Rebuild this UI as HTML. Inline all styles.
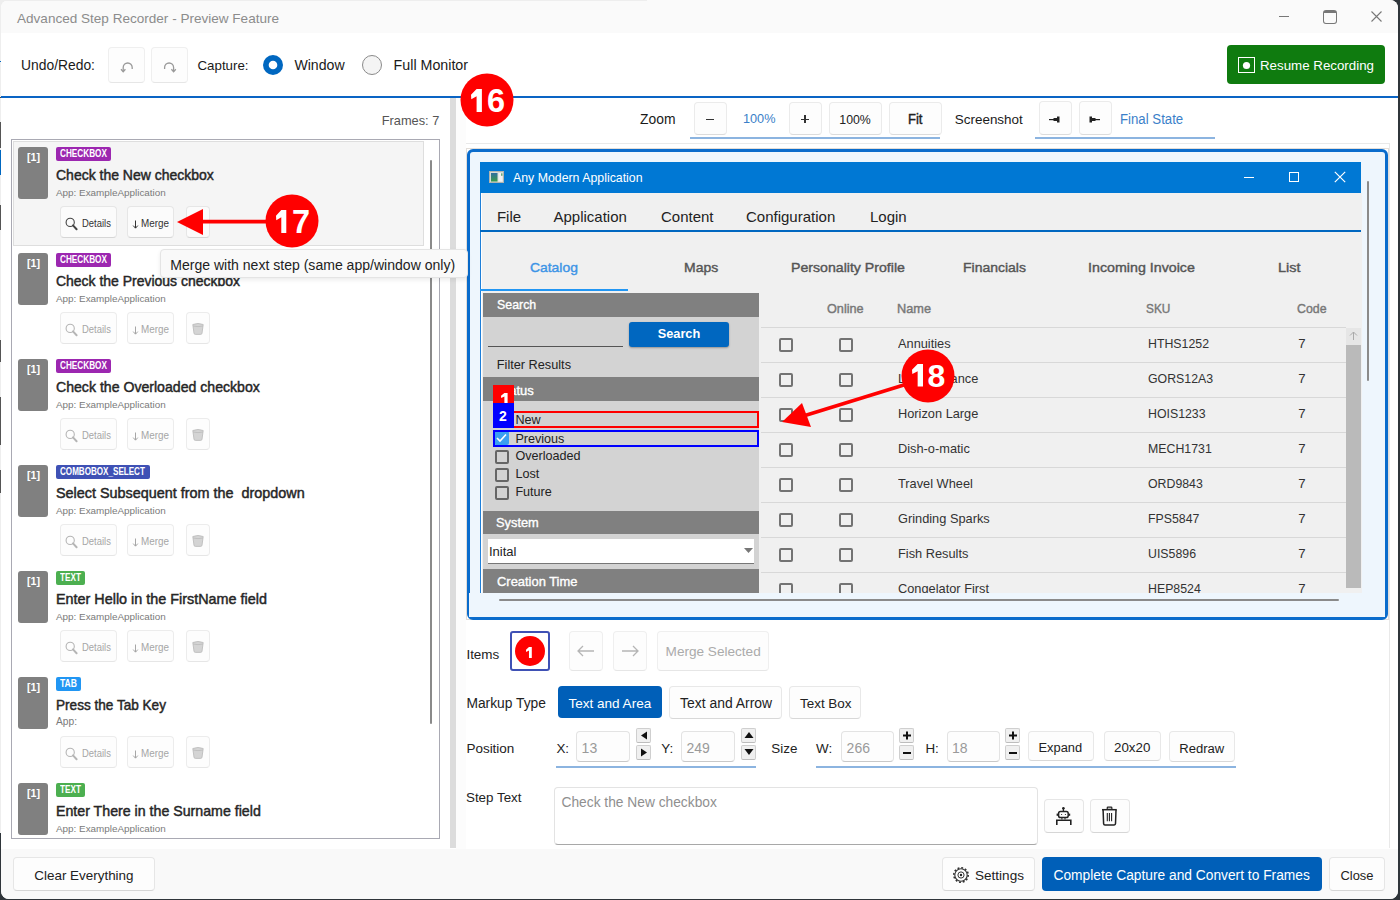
<!DOCTYPE html>
<html><head><meta charset="utf-8"><style>
html,body{margin:0;padding:0;width:1400px;height:900px;overflow:hidden;background:#2f353a;}
#root>*{position:absolute;}
.t{position:absolute;font-family:"Liberation Sans", sans-serif;line-height:1;white-space:pre;}
</style></head><body><div id="root" style="position:relative;width:1400px;height:900px;">
<div style="left:0px;top:0px;width:12px;height:12px;background:#eeeeee;"></div>
<div style="left:1px;top:0px;width:1397px;height:899px;background:#ffffff;border-radius:8px;"></div>
<div style="left:1px;top:0px;width:1397px;height:33px;background:#fafafa;border-radius:8px 8px 0 0;"></div>
<div style="left:1px;top:96px;width:1397px;height:2px;background:#0a64c4;"></div>
<div style="left:1px;top:849px;width:1397px;height:50px;background:#f9f9f9;border-radius:0 0 8px 8px;"></div>
<div class="t" style="left:17.0px;top:12.29px;font-size:13.55px;font-weight:400;color:#8c8c8c;">Advanced Step Recorder - Preview Feature</div>
<div style="left:1279px;top:16px;width:10px;height:1px;background:#777;"></div>
<div style="left:1323px;top:10px;width:14px;height:14px;border:1px solid #777;border-top-width:3px;border-radius:3px;box-sizing:border-box;"></div>
<svg style="left:1370px;top:10px;" width="13" height="13" viewBox="0 0 13 13"><path d="M1.5 1.5 L11.5 11.5 M11.5 1.5 L1.5 11.5" stroke="#777" stroke-width="1.1"/></svg>
<div class="t" style="left:21.0px;top:59.21px;font-size:13.87px;font-weight:400;color:#1a1a1a;">Undo/Redo:</div>
<div style="left:108px;top:47px;width:37px;height:36px;background:#fdfdfd;border:1px solid #efefef;border-bottom-color:#e6e6e6;border-radius:4px;box-sizing:border-box;"></div>
<div style="left:151px;top:47px;width:37px;height:36px;background:#fdfdfd;border:1px solid #efefef;border-bottom-color:#e6e6e6;border-radius:4px;box-sizing:border-box;"></div>
<svg style="left:119px;top:61px;" width="16" height="13" viewBox="0 0 16 13"><path d="M4.2 10.5 V6.5 A4.5 4.5 0 0 1 13.2 6.5 V8" fill="none" stroke="#9a9a9a" stroke-width="1.3"/><path d="M2 8.3 L4.2 10.7 L6.4 8.3" fill="none" stroke="#9a9a9a" stroke-width="1.3"/></svg>
<svg style="left:162px;top:61px;" width="16" height="13" viewBox="0 0 16 13"><path d="M2.6 8 V6.5 A4.5 4.5 0 0 1 11.6 6.5 V10.5" fill="none" stroke="#9a9a9a" stroke-width="1.3"/><path d="M9.4 8.3 L11.6 10.7 L13.8 8.3" fill="none" stroke="#9a9a9a" stroke-width="1.3"/></svg>
<div class="t" style="left:197.5px;top:59.20px;font-size:13.30px;font-weight:400;color:#1a1a1a;">Capture:</div>
<svg style="left:262px;top:54px;" width="22" height="22" viewBox="0 0 22 22"><circle cx="11" cy="11" r="10" fill="#0067c0"/><circle cx="11" cy="11" r="4.3" fill="#fff"/></svg>
<div class="t" style="left:294.4px;top:58.48px;font-size:14.14px;font-weight:400;color:#1a1a1a;">Window</div>
<svg style="left:361px;top:54px;" width="22" height="22" viewBox="0 0 22 22"><circle cx="11" cy="11" r="9.5" fill="#f4f4f4" stroke="#8a8a8a" stroke-width="1"/></svg>
<div class="t" style="left:393.6px;top:58.38px;font-size:14.26px;font-weight:400;color:#1a1a1a;">Full Monitor</div>
<div style="left:1227px;top:45px;width:158px;height:39px;background:#0f7b0f;border-radius:4px;"></div>
<div style="left:1238px;top:57px;width:17px;height:16px;border:1.5px solid #fff;box-sizing:border-box;"></div>
<svg style="left:1240px;top:59px;" width="13" height="13" viewBox="0 0 13 13"><circle cx="6.5" cy="6.5" r="3.6" fill="#fff"/></svg>
<div class="t" style="left:1260.0px;top:58.68px;font-size:13.32px;font-weight:400;color:#ffffff;">Resume Recording</div>
<div style="left:450px;top:98px;width:6px;height:750px;background:#dcdcdc;"></div>
<div class="t" style="left:381.7px;top:114.92px;font-size:12.80px;font-weight:400;color:#555555;">Frames: 7</div>
<div style="left:11px;top:139px;width:429px;height:700px;border:1px solid #a9a9b3;box-sizing:border-box;background:#fff;"></div>
<div style="left:13px;top:141px;width:411px;height:105px;background:#f5f5f5;border:1px solid #dedede;box-sizing:border-box;"></div>
<div style="left:18px;top:147px;width:30px;height:52px;background:#808080;border-radius:3px;"></div>
<div class="t" style="left:26.6px;top:151.53px;font-size:11.50px;font-weight:700;color:#ffffff;transform:scaleX(0.925);transform-origin:0 0;">[1]</div>
<div style="left:56px;top:147px;width:55px;height:14px;background:#9c27b0;border-radius:2px;"></div>
<div class="t" style="left:60.0px;top:149.36px;font-size:10.40px;font-weight:700;color:#ffffff;transform:scaleX(0.790);transform-origin:0 0;">CHECKBOX</div>
<div class="t" style="left:56.0px;top:167.63px;font-size:14.20px;font-weight:400;color:#262626;transform:scaleX(0.986);transform-origin:0 0;-webkit-text-stroke:0.45px #262626;">Check the New checkbox</div>
<div class="t" style="left:56.0px;top:187.59px;font-size:9.89px;font-weight:400;color:#7a7a7a;">App: ExampleApplication</div>
<div style="left:59.5px;top:206px;width:57.0px;height:31.5px;background:#fbfbfb;border:1px solid #e6e6e6;border-bottom-color:#d6d6d6;border-radius:4px;box-sizing:border-box;"></div>
<div style="left:127.2px;top:206px;width:47.2px;height:31.5px;background:#fbfbfb;border:1px solid #e6e6e6;border-bottom-color:#d6d6d6;border-radius:4px;box-sizing:border-box;"></div>
<div style="left:185.5px;top:206px;width:24.900000000000006px;height:31.5px;background:#fbfbfb;border:1px solid #e6e6e6;border-bottom-color:#d6d6d6;border-radius:4px;box-sizing:border-box;"></div>
<svg style="left:64px;top:217px;" width="15" height="15" viewBox="0 0 15 15"><circle cx="6.2" cy="5.4" r="4.1" fill="none" stroke="#444444" stroke-width="1.1"/><path d="M9 8.4 L12.6 12.2" stroke="#444444" stroke-width="2" stroke-linecap="round"/></svg>
<div class="t" style="left:82.0px;top:219.13px;font-size:10.20px;font-weight:400;color:#333333;transform:scaleX(0.927);transform-origin:0 0;">Details</div>
<svg style="left:132px;top:219.5px;" width="7" height="9" viewBox="0 0 7 9"><path d="M3.5 0.5 V8 M1.2 5.6 L3.5 8.2 L5.8 5.6" fill="none" stroke="#333333" stroke-width="1"/></svg>
<div class="t" style="left:140.7px;top:219.13px;font-size:10.20px;font-weight:400;color:#333333;transform:scaleX(0.968);transform-origin:0 0;">Merge</div>
<div style="left:18px;top:253px;width:30px;height:52px;background:#808080;border-radius:3px;"></div>
<div class="t" style="left:26.6px;top:257.53px;font-size:11.50px;font-weight:700;color:#ffffff;transform:scaleX(0.925);transform-origin:0 0;">[1]</div>
<div style="left:56px;top:253px;width:55px;height:14px;background:#9c27b0;border-radius:2px;"></div>
<div class="t" style="left:60.0px;top:255.36px;font-size:10.40px;font-weight:700;color:#ffffff;transform:scaleX(0.790);transform-origin:0 0;">CHECKBOX</div>
<div class="t" style="left:56.0px;top:273.63px;font-size:14.20px;font-weight:400;color:#262626;transform:scaleX(0.984);transform-origin:0 0;-webkit-text-stroke:0.45px #262626;">Check the Previous checkbox</div>
<div class="t" style="left:56.0px;top:293.59px;font-size:9.89px;font-weight:400;color:#7a7a7a;">App: ExampleApplication</div>
<div style="left:59.5px;top:312px;width:57.0px;height:31.5px;background:#fdfdfd;border:1px solid #ececec;border-bottom-color:#e6e6e6;border-radius:4px;box-sizing:border-box;"></div>
<div style="left:127.2px;top:312px;width:47.2px;height:31.5px;background:#fdfdfd;border:1px solid #ececec;border-bottom-color:#e6e6e6;border-radius:4px;box-sizing:border-box;"></div>
<div style="left:185.5px;top:312px;width:24.900000000000006px;height:31.5px;background:#fdfdfd;border:1px solid #ececec;border-bottom-color:#e6e6e6;border-radius:4px;box-sizing:border-box;"></div>
<svg style="left:64px;top:323px;" width="15" height="15" viewBox="0 0 15 15"><circle cx="6.2" cy="5.4" r="4.1" fill="none" stroke="#b5b5b5" stroke-width="1.1"/><path d="M9 8.4 L12.6 12.2" stroke="#b5b5b5" stroke-width="2" stroke-linecap="round"/></svg>
<div class="t" style="left:82.0px;top:325.13px;font-size:10.20px;font-weight:400;color:#a6a6a6;transform:scaleX(0.927);transform-origin:0 0;">Details</div>
<svg style="left:132px;top:325.5px;" width="7" height="9" viewBox="0 0 7 9"><path d="M3.5 0.5 V8 M1.2 5.6 L3.5 8.2 L5.8 5.6" fill="none" stroke="#a6a6a6" stroke-width="1"/></svg>
<div class="t" style="left:140.7px;top:325.13px;font-size:10.20px;font-weight:400;color:#a6a6a6;transform:scaleX(0.968);transform-origin:0 0;">Merge</div>
<svg style="left:191px;top:322px;" width="14" height="14" viewBox="0 0 14 14"><path d="M1.8 2.5 Q7 0.5 12.2 2.5 L11 11.2 Q10.8 12.4 9.6 12.4 H4.4 Q3.2 12.4 3 11.2 Z" fill="#d4d4d4" stroke="#bdbdbd" stroke-width="0.9"/><path d="M2 4 Q7 5.3 12 4" fill="none" stroke="#bdbdbd" stroke-width="0.9"/></svg>
<div style="left:18px;top:359px;width:30px;height:52px;background:#808080;border-radius:3px;"></div>
<div class="t" style="left:26.6px;top:363.53px;font-size:11.50px;font-weight:700;color:#ffffff;transform:scaleX(0.925);transform-origin:0 0;">[1]</div>
<div style="left:56px;top:359px;width:55px;height:14px;background:#9c27b0;border-radius:2px;"></div>
<div class="t" style="left:60.0px;top:361.36px;font-size:10.40px;font-weight:700;color:#ffffff;transform:scaleX(0.790);transform-origin:0 0;">CHECKBOX</div>
<div class="t" style="left:56.0px;top:379.63px;font-size:14.20px;font-weight:400;color:#262626;transform:scaleX(0.994);transform-origin:0 0;-webkit-text-stroke:0.45px #262626;">Check the Overloaded checkbox</div>
<div class="t" style="left:56.0px;top:399.59px;font-size:9.89px;font-weight:400;color:#7a7a7a;">App: ExampleApplication</div>
<div style="left:59.5px;top:418px;width:57.0px;height:31.5px;background:#fdfdfd;border:1px solid #ececec;border-bottom-color:#e6e6e6;border-radius:4px;box-sizing:border-box;"></div>
<div style="left:127.2px;top:418px;width:47.2px;height:31.5px;background:#fdfdfd;border:1px solid #ececec;border-bottom-color:#e6e6e6;border-radius:4px;box-sizing:border-box;"></div>
<div style="left:185.5px;top:418px;width:24.900000000000006px;height:31.5px;background:#fdfdfd;border:1px solid #ececec;border-bottom-color:#e6e6e6;border-radius:4px;box-sizing:border-box;"></div>
<svg style="left:64px;top:429px;" width="15" height="15" viewBox="0 0 15 15"><circle cx="6.2" cy="5.4" r="4.1" fill="none" stroke="#b5b5b5" stroke-width="1.1"/><path d="M9 8.4 L12.6 12.2" stroke="#b5b5b5" stroke-width="2" stroke-linecap="round"/></svg>
<div class="t" style="left:82.0px;top:431.13px;font-size:10.20px;font-weight:400;color:#a6a6a6;transform:scaleX(0.927);transform-origin:0 0;">Details</div>
<svg style="left:132px;top:431.5px;" width="7" height="9" viewBox="0 0 7 9"><path d="M3.5 0.5 V8 M1.2 5.6 L3.5 8.2 L5.8 5.6" fill="none" stroke="#a6a6a6" stroke-width="1"/></svg>
<div class="t" style="left:140.7px;top:431.13px;font-size:10.20px;font-weight:400;color:#a6a6a6;transform:scaleX(0.968);transform-origin:0 0;">Merge</div>
<svg style="left:191px;top:428px;" width="14" height="14" viewBox="0 0 14 14"><path d="M1.8 2.5 Q7 0.5 12.2 2.5 L11 11.2 Q10.8 12.4 9.6 12.4 H4.4 Q3.2 12.4 3 11.2 Z" fill="#d4d4d4" stroke="#bdbdbd" stroke-width="0.9"/><path d="M2 4 Q7 5.3 12 4" fill="none" stroke="#bdbdbd" stroke-width="0.9"/></svg>
<div style="left:18px;top:465px;width:30px;height:52px;background:#808080;border-radius:3px;"></div>
<div class="t" style="left:26.6px;top:469.53px;font-size:11.50px;font-weight:700;color:#ffffff;transform:scaleX(0.925);transform-origin:0 0;">[1]</div>
<div style="left:56px;top:465px;width:94px;height:14px;background:#3f51b5;border-radius:2px;"></div>
<div class="t" style="left:60.0px;top:467.36px;font-size:10.40px;font-weight:700;color:#ffffff;transform:scaleX(0.778);transform-origin:0 0;">COMBOBOX_SELECT</div>
<div class="t" style="left:56.0px;top:485.63px;font-size:14.20px;font-weight:400;color:#262626;transform:scaleX(1.014);transform-origin:0 0;-webkit-text-stroke:0.45px #262626;">Select Subsequent from the  dropdown</div>
<div class="t" style="left:56.0px;top:505.59px;font-size:9.89px;font-weight:400;color:#7a7a7a;">App: ExampleApplication</div>
<div style="left:59.5px;top:524px;width:57.0px;height:31.5px;background:#fdfdfd;border:1px solid #ececec;border-bottom-color:#e6e6e6;border-radius:4px;box-sizing:border-box;"></div>
<div style="left:127.2px;top:524px;width:47.2px;height:31.5px;background:#fdfdfd;border:1px solid #ececec;border-bottom-color:#e6e6e6;border-radius:4px;box-sizing:border-box;"></div>
<div style="left:185.5px;top:524px;width:24.900000000000006px;height:31.5px;background:#fdfdfd;border:1px solid #ececec;border-bottom-color:#e6e6e6;border-radius:4px;box-sizing:border-box;"></div>
<svg style="left:64px;top:535px;" width="15" height="15" viewBox="0 0 15 15"><circle cx="6.2" cy="5.4" r="4.1" fill="none" stroke="#b5b5b5" stroke-width="1.1"/><path d="M9 8.4 L12.6 12.2" stroke="#b5b5b5" stroke-width="2" stroke-linecap="round"/></svg>
<div class="t" style="left:82.0px;top:537.13px;font-size:10.20px;font-weight:400;color:#a6a6a6;transform:scaleX(0.927);transform-origin:0 0;">Details</div>
<svg style="left:132px;top:537.5px;" width="7" height="9" viewBox="0 0 7 9"><path d="M3.5 0.5 V8 M1.2 5.6 L3.5 8.2 L5.8 5.6" fill="none" stroke="#a6a6a6" stroke-width="1"/></svg>
<div class="t" style="left:140.7px;top:537.13px;font-size:10.20px;font-weight:400;color:#a6a6a6;transform:scaleX(0.968);transform-origin:0 0;">Merge</div>
<svg style="left:191px;top:534px;" width="14" height="14" viewBox="0 0 14 14"><path d="M1.8 2.5 Q7 0.5 12.2 2.5 L11 11.2 Q10.8 12.4 9.6 12.4 H4.4 Q3.2 12.4 3 11.2 Z" fill="#d4d4d4" stroke="#bdbdbd" stroke-width="0.9"/><path d="M2 4 Q7 5.3 12 4" fill="none" stroke="#bdbdbd" stroke-width="0.9"/></svg>
<div style="left:18px;top:571px;width:30px;height:52px;background:#808080;border-radius:3px;"></div>
<div class="t" style="left:26.6px;top:575.52px;font-size:11.50px;font-weight:700;color:#ffffff;transform:scaleX(0.925);transform-origin:0 0;">[1]</div>
<div style="left:56px;top:571px;width:29px;height:14px;background:#4caf50;border-radius:2px;"></div>
<div class="t" style="left:60.0px;top:573.36px;font-size:10.40px;font-weight:700;color:#ffffff;transform:scaleX(0.790);transform-origin:0 0;">TEXT</div>
<div class="t" style="left:56.0px;top:591.63px;font-size:14.20px;font-weight:400;color:#262626;transform:scaleX(1.013);transform-origin:0 0;-webkit-text-stroke:0.45px #262626;">Enter Hello in the FirstName field</div>
<div class="t" style="left:56.0px;top:611.59px;font-size:9.89px;font-weight:400;color:#7a7a7a;">App: ExampleApplication</div>
<div style="left:59.5px;top:630px;width:57.0px;height:31.5px;background:#fdfdfd;border:1px solid #ececec;border-bottom-color:#e6e6e6;border-radius:4px;box-sizing:border-box;"></div>
<div style="left:127.2px;top:630px;width:47.2px;height:31.5px;background:#fdfdfd;border:1px solid #ececec;border-bottom-color:#e6e6e6;border-radius:4px;box-sizing:border-box;"></div>
<div style="left:185.5px;top:630px;width:24.900000000000006px;height:31.5px;background:#fdfdfd;border:1px solid #ececec;border-bottom-color:#e6e6e6;border-radius:4px;box-sizing:border-box;"></div>
<svg style="left:64px;top:641px;" width="15" height="15" viewBox="0 0 15 15"><circle cx="6.2" cy="5.4" r="4.1" fill="none" stroke="#b5b5b5" stroke-width="1.1"/><path d="M9 8.4 L12.6 12.2" stroke="#b5b5b5" stroke-width="2" stroke-linecap="round"/></svg>
<div class="t" style="left:82.0px;top:643.13px;font-size:10.20px;font-weight:400;color:#a6a6a6;transform:scaleX(0.927);transform-origin:0 0;">Details</div>
<svg style="left:132px;top:643.5px;" width="7" height="9" viewBox="0 0 7 9"><path d="M3.5 0.5 V8 M1.2 5.6 L3.5 8.2 L5.8 5.6" fill="none" stroke="#a6a6a6" stroke-width="1"/></svg>
<div class="t" style="left:140.7px;top:643.13px;font-size:10.20px;font-weight:400;color:#a6a6a6;transform:scaleX(0.968);transform-origin:0 0;">Merge</div>
<svg style="left:191px;top:640px;" width="14" height="14" viewBox="0 0 14 14"><path d="M1.8 2.5 Q7 0.5 12.2 2.5 L11 11.2 Q10.8 12.4 9.6 12.4 H4.4 Q3.2 12.4 3 11.2 Z" fill="#d4d4d4" stroke="#bdbdbd" stroke-width="0.9"/><path d="M2 4 Q7 5.3 12 4" fill="none" stroke="#bdbdbd" stroke-width="0.9"/></svg>
<div style="left:18px;top:677px;width:30px;height:52px;background:#808080;border-radius:3px;"></div>
<div class="t" style="left:26.6px;top:681.52px;font-size:11.50px;font-weight:700;color:#ffffff;transform:scaleX(0.925);transform-origin:0 0;">[1]</div>
<div style="left:56px;top:677px;width:25px;height:14px;background:#2196f3;border-radius:2px;"></div>
<div class="t" style="left:60.0px;top:679.36px;font-size:10.40px;font-weight:700;color:#ffffff;transform:scaleX(0.825);transform-origin:0 0;">TAB</div>
<div class="t" style="left:56.0px;top:697.63px;font-size:14.20px;font-weight:400;color:#262626;transform:scaleX(0.957);transform-origin:0 0;-webkit-text-stroke:0.45px #262626;">Press the Tab Key</div>
<div class="t" style="left:56.0px;top:717.32px;font-size:10.21px;font-weight:400;color:#7a7a7a;">App:</div>
<div style="left:59.5px;top:736px;width:57.0px;height:31.5px;background:#fdfdfd;border:1px solid #ececec;border-bottom-color:#e6e6e6;border-radius:4px;box-sizing:border-box;"></div>
<div style="left:127.2px;top:736px;width:47.2px;height:31.5px;background:#fdfdfd;border:1px solid #ececec;border-bottom-color:#e6e6e6;border-radius:4px;box-sizing:border-box;"></div>
<div style="left:185.5px;top:736px;width:24.900000000000006px;height:31.5px;background:#fdfdfd;border:1px solid #ececec;border-bottom-color:#e6e6e6;border-radius:4px;box-sizing:border-box;"></div>
<svg style="left:64px;top:747px;" width="15" height="15" viewBox="0 0 15 15"><circle cx="6.2" cy="5.4" r="4.1" fill="none" stroke="#b5b5b5" stroke-width="1.1"/><path d="M9 8.4 L12.6 12.2" stroke="#b5b5b5" stroke-width="2" stroke-linecap="round"/></svg>
<div class="t" style="left:82.0px;top:749.13px;font-size:10.20px;font-weight:400;color:#a6a6a6;transform:scaleX(0.927);transform-origin:0 0;">Details</div>
<svg style="left:132px;top:749.5px;" width="7" height="9" viewBox="0 0 7 9"><path d="M3.5 0.5 V8 M1.2 5.6 L3.5 8.2 L5.8 5.6" fill="none" stroke="#a6a6a6" stroke-width="1"/></svg>
<div class="t" style="left:140.7px;top:749.13px;font-size:10.20px;font-weight:400;color:#a6a6a6;transform:scaleX(0.968);transform-origin:0 0;">Merge</div>
<svg style="left:191px;top:746px;" width="14" height="14" viewBox="0 0 14 14"><path d="M1.8 2.5 Q7 0.5 12.2 2.5 L11 11.2 Q10.8 12.4 9.6 12.4 H4.4 Q3.2 12.4 3 11.2 Z" fill="#d4d4d4" stroke="#bdbdbd" stroke-width="0.9"/><path d="M2 4 Q7 5.3 12 4" fill="none" stroke="#bdbdbd" stroke-width="0.9"/></svg>
<div style="left:18px;top:783px;width:30px;height:52px;background:#808080;border-radius:3px;"></div>
<div class="t" style="left:26.6px;top:787.52px;font-size:11.50px;font-weight:700;color:#ffffff;transform:scaleX(0.925);transform-origin:0 0;">[1]</div>
<div style="left:56px;top:783px;width:29px;height:14px;background:#4caf50;border-radius:2px;"></div>
<div class="t" style="left:60.0px;top:785.36px;font-size:10.40px;font-weight:700;color:#ffffff;transform:scaleX(0.790);transform-origin:0 0;">TEXT</div>
<div class="t" style="left:56.0px;top:803.63px;font-size:14.20px;font-weight:400;color:#262626;transform:scaleX(1.000);transform-origin:0 0;-webkit-text-stroke:0.45px #262626;">Enter There in the Surname field</div>
<div class="t" style="left:56.0px;top:823.59px;font-size:9.89px;font-weight:400;color:#7a7a7a;">App: ExampleApplication</div>
<div style="left:430px;top:160px;width:2px;height:564px;background:#8a8a8a;border-radius:1px;"></div>
<div style="left:0px;top:0px;width:1px;height:833px;background:#eeeeee;"></div>
<div style="left:0px;top:0px;width:647px;height:1px;background:#eeeeee;"></div>
<div style="left:0px;top:61px;width:1px;height:1px;background:#0067c0;"></div>
<div style="left:0px;top:97px;width:1px;height:1px;background:#444;"></div>
<div style="left:0px;top:122px;width:1px;height:26px;background:#555;"></div>
<div style="left:0px;top:150px;width:1px;height:25px;background:#0067c0;"></div>
<div style="left:0px;top:205px;width:1px;height:25px;background:#555;"></div>
<div style="left:0px;top:340px;width:1px;height:22px;background:#555;"></div>
<div style="left:0px;top:397px;width:1px;height:48px;background:#555;"></div>
<div style="left:0px;top:470px;width:1px;height:23px;background:#555;"></div>
<div class="t" style="left:640.0px;top:113.20px;font-size:13.89px;font-weight:400;color:#1a1a1a;">Zoom</div>
<div style="left:694px;top:102px;width:33px;height:33px;background:#fdfdfd;border:1px solid #ebebeb;border-bottom-color:#dcdcdc;border-radius:4px;box-sizing:border-box;"></div>
<div style="left:706px;top:119px;width:8px;height:1px;background:#333;"></div>
<div class="t" style="left:743.4px;top:112.44px;font-size:13.60px;font-weight:400;color:#3b7fc9;transform:scaleX(0.934);transform-origin:0 0;">100%</div>
<div style="left:789px;top:102px;width:33px;height:33px;background:#fdfdfd;border:1px solid #ebebeb;border-bottom-color:#dcdcdc;border-radius:4px;box-sizing:border-box;"></div>
<div style="left:801px;top:118.5px;width:8px;height:1.2000000000000028px;background:#333;"></div>
<div style="left:804.4px;top:115px;width:1.2000000000000455px;height:8px;background:#333;"></div>
<div style="left:829px;top:102px;width:53px;height:33px;background:#fdfdfd;border:1px solid #ebebeb;border-bottom-color:#dcdcdc;border-radius:4px;box-sizing:border-box;"></div>
<div class="t" style="left:839.3px;top:113.53px;font-size:12.32px;font-weight:400;color:#222;">100%</div>
<div style="left:889px;top:102px;width:53px;height:33px;background:#fdfdfd;border:1px solid #ebebeb;border-bottom-color:#dcdcdc;border-radius:4px;box-sizing:border-box;"></div>
<div class="t" style="left:907.8px;top:112.10px;font-size:14.00px;font-weight:400;color:#222;transform:scaleX(0.932);transform-origin:0 0;-webkit-text-stroke:0.4px #222;">Fit</div>
<div style="left:690px;top:137px;width:250px;height:2px;background:#8cb4e0;"></div>
<div class="t" style="left:954.8px;top:112.57px;font-size:13.44px;font-weight:400;color:#1a1a1a;">Screenshot</div>
<div style="left:1039px;top:101px;width:33px;height:34px;background:#fdfdfd;border:1px solid #ebebeb;border-bottom-color:#dcdcdc;border-radius:4px;box-sizing:border-box;"></div>
<div style="left:1079px;top:101px;width:33px;height:34px;background:#fdfdfd;border:1px solid #ebebeb;border-bottom-color:#dcdcdc;border-radius:4px;box-sizing:border-box;"></div>
<svg style="left:1049px;top:116px;" width="12" height="7" viewBox="0 0 12 7"><rect x="0" y="3" width="5" height="1.2" fill="#222"/><rect x="4.5" y="2" width="3.5" height="3" fill="#222"/><rect x="8" y="0.5" width="2.5" height="6" fill="#222"/></svg>
<svg style="left:1089px;top:116px;" width="12" height="7" viewBox="0 0 12 7"><rect x="6" y="3" width="5" height="1.2" fill="#222"/><rect x="3" y="2" width="3.5" height="3" fill="#222"/><rect x="0.5" y="0.5" width="2.5" height="6" fill="#222"/></svg>
<div class="t" style="left:1120.0px;top:112.10px;font-size:14.00px;font-weight:400;color:#3b7fc9;transform:scaleX(0.944);transform-origin:0 0;">Final State</div>
<div style="left:1035px;top:137px;width:180px;height:2px;background:#8cb4e0;"></div>
<div style="left:466px;top:143px;width:923px;height:1px;background:#e9e9e9;"></div>
<div style="left:456px;top:98px;width:10px;height:751px;background:#fcfcfc;"></div>
<div style="left:1389px;top:143px;width:1px;height:705px;background:#e9e9e9;"></div>
<div style="left:466px;top:148px;width:923px;height:472px;background:#fff;border:1px solid #e2ddd8;box-sizing:border-box;"></div>
<div style="left:467px;top:149px;width:921px;height:471px;background:#eef6fd;border:3px solid #0a6ccc;border-radius:6px;box-sizing:border-box;"></div>
<div style="left:480px;top:162px;width:881px;height:431px;background:#f0f0f0;"></div>
<div style="left:480px;top:162px;width:881px;height:31px;background:#0078d4;"></div>
<div style="left:481px;top:193px;width:1px;height:400px;background:#ffffff;"></div>
<div style="left:480px;top:193px;width:1px;height:400px;background:#1f7fd8;"></div>
<svg style="left:489px;top:171px;" width="15" height="12" viewBox="0 0 15 12"><defs><linearGradient id="ig" x1="0" y1="0" x2="0" y2="1"><stop offset="0" stop-color="#2f6fa0"/><stop offset="1" stop-color="#3a9a4a"/></linearGradient></defs><rect x="0" y="0" width="15" height="12" fill="#d8dcd8"/><rect x="0.5" y="0.5" width="14" height="11" fill="none" stroke="#b0b4b0" stroke-width="1"/><rect x="2" y="2" width="6.5" height="8.5" fill="url(#ig)"/><rect x="9.5" y="2" width="4" height="8.5" fill="#f2f2f2"/><rect x="12.2" y="2.3" width="1.2" height="2.5" fill="#4a9a5a"/></svg>
<div class="t" style="left:513.0px;top:172.11px;font-size:12.34px;font-weight:400;color:#ffffff;">Any Modern Application</div>
<div style="left:1244px;top:177px;width:10px;height:1px;background:#fff;"></div>
<div style="left:1289px;top:172px;width:10px;height:10px;border:1px solid #fff;box-sizing:border-box;"></div>
<svg style="left:1334px;top:171px;" width="12" height="12" viewBox="0 0 12 12"><path d="M0.8 0.8 L11.2 11.2 M11.2 0.8 L0.8 11.2" stroke="#fff" stroke-width="1.2"/></svg>
<div style="left:480px;top:230px;width:881px;height:2px;background:#0067c0;"></div>
<div class="t" style="left:496.9px;top:209.45px;font-size:15.00px;font-weight:400;color:#222;">File</div>
<div class="t" style="left:553.5px;top:209.45px;font-size:15.00px;font-weight:400;color:#222;">Application</div>
<div class="t" style="left:661.0px;top:209.45px;font-size:15.00px;font-weight:400;color:#222;">Content</div>
<div class="t" style="left:746.0px;top:209.45px;font-size:15.00px;font-weight:400;color:#222;">Configuration</div>
<div class="t" style="left:870.0px;top:209.45px;font-size:15.00px;font-weight:400;color:#222;">Login</div>
<div class="t" style="left:530.4px;top:260.64px;font-size:13.60px;font-weight:400;color:#3d94e6;transform:scaleX(1.022);transform-origin:0 0;-webkit-text-stroke:0.4px #3d94e6;">Catalog</div>
<div class="t" style="left:683.9px;top:260.64px;font-size:13.60px;font-weight:400;color:#555;transform:scaleX(1.028);transform-origin:0 0;-webkit-text-stroke:0.4px #555;">Maps</div>
<div class="t" style="left:791.0px;top:260.64px;font-size:13.60px;font-weight:400;color:#555;transform:scaleX(1.040);transform-origin:0 0;-webkit-text-stroke:0.4px #555;">Personality Profile</div>
<div class="t" style="left:963.0px;top:260.64px;font-size:13.60px;font-weight:400;color:#555;transform:scaleX(1.029);transform-origin:0 0;-webkit-text-stroke:0.4px #555;">Financials</div>
<div class="t" style="left:1088.0px;top:260.64px;font-size:13.60px;font-weight:400;color:#555;transform:scaleX(1.048);transform-origin:0 0;-webkit-text-stroke:0.4px #555;">Incoming Invoice</div>
<div class="t" style="left:1277.5px;top:260.64px;font-size:13.60px;font-weight:400;color:#555;transform:scaleX(1.063);transform-origin:0 0;-webkit-text-stroke:0.4px #555;">List</div>
<div style="left:480px;top:289px;width:148px;height:2px;background:#2196f3;"></div>
<div style="left:483px;top:293px;width:276px;height:300px;background:#d3d3d3;"></div>
<div style="left:483px;top:293px;width:276px;height:24px;background:#808080;"></div>
<div style="left:483px;top:377px;width:276px;height:24px;background:#808080;"></div>
<div style="left:483px;top:511px;width:276px;height:23px;background:#808080;"></div>
<div style="left:483px;top:569px;width:276px;height:24px;background:#808080;"></div>
<div class="t" style="left:496.8px;top:297.95px;font-size:13.00px;font-weight:400;color:#ffffff;transform:scaleX(0.952);transform-origin:0 0;-webkit-text-stroke:0.35px #fff;">Search</div>
<div style="left:629px;top:322px;width:100px;height:25px;background:#0067c0;border-radius:3px;box-shadow:0 1px 2px rgba(0,0,0,0.3);"></div>
<div class="t" style="left:657.7px;top:327.74px;font-size:12.77px;font-weight:700;color:#ffffff;">Search</div>
<div style="left:488px;top:346px;width:135px;height:1px;background:#555;"></div>
<div class="t" style="left:496.8px;top:359.48px;font-size:12.73px;font-weight:400;color:#222;">Filter Results</div>
<div class="t" style="left:496.8px;top:384.25px;font-size:13.00px;font-weight:400;color:#ffffff;transform:scaleX(0.999);transform-origin:0 0;-webkit-text-stroke:0.35px #fff;">Status</div>
<div class="t" style="left:515.4px;top:414.49px;font-size:12.60px;font-weight:400;color:#222;">New</div>
<div class="t" style="left:515.4px;top:432.59px;font-size:12.60px;font-weight:400;color:#222;">Previous</div>
<div class="t" style="left:515.4px;top:450.39px;font-size:12.60px;font-weight:400;color:#222;">Overloaded</div>
<div class="t" style="left:515.4px;top:468.39px;font-size:12.60px;font-weight:400;color:#222;">Lost</div>
<div class="t" style="left:515.4px;top:486.39px;font-size:12.60px;font-weight:400;color:#222;">Future</div>
<div style="left:495px;top:413px;width:14px;height:14px;border:2px solid #666;border-radius:2px;box-sizing:border-box;"></div>
<div style="left:495px;top:449.5px;width:14px;height:14.0px;border:2px solid #666;border-radius:2px;box-sizing:border-box;"></div>
<div style="left:495px;top:467.5px;width:14px;height:14.0px;border:2px solid #666;border-radius:2px;box-sizing:border-box;"></div>
<div style="left:495px;top:485.5px;width:14px;height:14.0px;border:2px solid #666;border-radius:2px;box-sizing:border-box;"></div>
<div style="left:494px;top:431px;width:15px;height:14px;background:#3ba0f0;border-radius:2px;"></div>
<svg style="left:494px;top:431px;" width="15" height="14" viewBox="0 0 15 14"><path d="M3 7 L6 10 L12 3.5" fill="none" stroke="#fff" stroke-width="1.6"/></svg>
<div class="t" style="left:496.4px;top:516.05px;font-size:13.00px;font-weight:400;color:#ffffff;transform:scaleX(0.987);transform-origin:0 0;-webkit-text-stroke:0.35px #fff;">System</div>
<div style="left:488px;top:539px;width:266px;height:25px;background:#fff;border-bottom:1px solid #777;box-sizing:border-box;"></div>
<div class="t" style="left:489.0px;top:544.93px;font-size:13.02px;font-weight:400;color:#222;">Inital</div>
<svg style="left:744px;top:548px;" width="10" height="6" viewBox="0 0 10 6"><path d="M0 0 H9 L4.5 5 Z" fill="#777"/></svg>
<div class="t" style="left:496.7px;top:575.45px;font-size:13.00px;font-weight:400;color:#ffffff;transform:scaleX(0.994);transform-origin:0 0;-webkit-text-stroke:0.35px #fff;">Creation Time</div>
<div class="t" style="left:827.3px;top:302.35px;font-size:13.00px;font-weight:400;color:#777;transform:scaleX(0.974);transform-origin:0 0;-webkit-text-stroke:0.4px #777;">Online</div>
<div class="t" style="left:896.5px;top:302.35px;font-size:13.00px;font-weight:400;color:#777;transform:scaleX(0.980);transform-origin:0 0;-webkit-text-stroke:0.4px #777;">Name</div>
<div class="t" style="left:1146.0px;top:302.35px;font-size:13.00px;font-weight:400;color:#777;transform:scaleX(0.909);transform-origin:0 0;-webkit-text-stroke:0.4px #777;">SKU</div>
<div class="t" style="left:1296.5px;top:302.35px;font-size:13.00px;font-weight:400;color:#777;transform:scaleX(0.949);transform-origin:0 0;-webkit-text-stroke:0.4px #777;">Code</div>
<div style="left:761px;top:327px;width:585px;height:1px;background:#d8d8d8;"></div>
<div style="left:779px;top:338px;width:14px;height:13.5px;border:2px solid #737373;border-radius:2px;box-sizing:border-box;"></div>
<div style="left:839px;top:338px;width:14px;height:13.5px;border:2px solid #737373;border-radius:2px;box-sizing:border-box;"></div>
<div style="left:761px;top:362px;width:585px;height:1px;background:#d8d8d8;"></div>
<div style="left:779px;top:373px;width:14px;height:13.5px;border:2px solid #737373;border-radius:2px;box-sizing:border-box;"></div>
<div style="left:839px;top:373px;width:14px;height:13.5px;border:2px solid #737373;border-radius:2px;box-sizing:border-box;"></div>
<div style="left:761px;top:397px;width:585px;height:1px;background:#d8d8d8;"></div>
<div style="left:779px;top:408px;width:14px;height:13.5px;border:2px solid #737373;border-radius:2px;box-sizing:border-box;"></div>
<div style="left:839px;top:408px;width:14px;height:13.5px;border:2px solid #737373;border-radius:2px;box-sizing:border-box;"></div>
<div style="left:761px;top:432px;width:585px;height:1px;background:#d8d8d8;"></div>
<div style="left:779px;top:443px;width:14px;height:13.5px;border:2px solid #737373;border-radius:2px;box-sizing:border-box;"></div>
<div style="left:839px;top:443px;width:14px;height:13.5px;border:2px solid #737373;border-radius:2px;box-sizing:border-box;"></div>
<div style="left:761px;top:467px;width:585px;height:1px;background:#d8d8d8;"></div>
<div style="left:779px;top:478px;width:14px;height:13.5px;border:2px solid #737373;border-radius:2px;box-sizing:border-box;"></div>
<div style="left:839px;top:478px;width:14px;height:13.5px;border:2px solid #737373;border-radius:2px;box-sizing:border-box;"></div>
<div style="left:761px;top:502px;width:585px;height:1px;background:#d8d8d8;"></div>
<div style="left:779px;top:513px;width:14px;height:13.5px;border:2px solid #737373;border-radius:2px;box-sizing:border-box;"></div>
<div style="left:839px;top:513px;width:14px;height:13.5px;border:2px solid #737373;border-radius:2px;box-sizing:border-box;"></div>
<div style="left:761px;top:537px;width:585px;height:1px;background:#d8d8d8;"></div>
<div style="left:779px;top:548px;width:14px;height:13.5px;border:2px solid #737373;border-radius:2px;box-sizing:border-box;"></div>
<div style="left:839px;top:548px;width:14px;height:13.5px;border:2px solid #737373;border-radius:2px;box-sizing:border-box;"></div>
<div style="left:761px;top:572px;width:585px;height:1px;background:#d8d8d8;"></div>
<div style="left:779px;top:583px;width:14px;height:13.5px;border:2px solid #737373;border-radius:2px;box-sizing:border-box;"></div>
<div style="left:839px;top:583px;width:14px;height:13.5px;border:2px solid #737373;border-radius:2px;box-sizing:border-box;"></div>
<div class="t" style="left:898.4px;top:336.88px;font-size:13.20px;font-weight:400;color:#333;transform:scaleX(0.970);transform-origin:0 0;">Annuities</div>
<div class="t" style="left:1148.2px;top:336.88px;font-size:13.20px;font-weight:400;color:#333;transform:scaleX(0.935);transform-origin:0 0;">HTHS1252</div>
<div class="t" style="left:1298.2px;top:336.88px;font-size:13.20px;font-weight:400;color:#333;">7</div>
<div class="t" style="left:898.4px;top:371.88px;font-size:13.20px;font-weight:400;color:#333;transform:scaleX(0.970);transform-origin:0 0;">Life Insurance</div>
<div class="t" style="left:1148.2px;top:371.88px;font-size:13.20px;font-weight:400;color:#333;transform:scaleX(0.935);transform-origin:0 0;">GORS12A3</div>
<div class="t" style="left:1298.2px;top:371.88px;font-size:13.20px;font-weight:400;color:#333;">7</div>
<div class="t" style="left:898.4px;top:406.88px;font-size:13.20px;font-weight:400;color:#333;transform:scaleX(0.970);transform-origin:0 0;">Horizon Large</div>
<div class="t" style="left:1148.2px;top:406.88px;font-size:13.20px;font-weight:400;color:#333;transform:scaleX(0.935);transform-origin:0 0;">HOIS1233</div>
<div class="t" style="left:1298.2px;top:406.88px;font-size:13.20px;font-weight:400;color:#333;">7</div>
<div class="t" style="left:898.4px;top:441.88px;font-size:13.20px;font-weight:400;color:#333;transform:scaleX(0.970);transform-origin:0 0;">Dish-o-matic</div>
<div class="t" style="left:1148.2px;top:441.88px;font-size:13.20px;font-weight:400;color:#333;transform:scaleX(0.935);transform-origin:0 0;">MECH1731</div>
<div class="t" style="left:1298.2px;top:441.88px;font-size:13.20px;font-weight:400;color:#333;">7</div>
<div class="t" style="left:898.4px;top:476.88px;font-size:13.20px;font-weight:400;color:#333;transform:scaleX(0.970);transform-origin:0 0;">Travel Wheel</div>
<div class="t" style="left:1148.2px;top:476.88px;font-size:13.20px;font-weight:400;color:#333;transform:scaleX(0.935);transform-origin:0 0;">ORD9843</div>
<div class="t" style="left:1298.2px;top:476.88px;font-size:13.20px;font-weight:400;color:#333;">7</div>
<div class="t" style="left:898.4px;top:511.88px;font-size:13.20px;font-weight:400;color:#333;transform:scaleX(0.970);transform-origin:0 0;">Grinding Sparks</div>
<div class="t" style="left:1148.2px;top:511.88px;font-size:13.20px;font-weight:400;color:#333;transform:scaleX(0.935);transform-origin:0 0;">FPS5847</div>
<div class="t" style="left:1298.2px;top:511.88px;font-size:13.20px;font-weight:400;color:#333;">7</div>
<div class="t" style="left:898.4px;top:546.88px;font-size:13.20px;font-weight:400;color:#333;transform:scaleX(0.970);transform-origin:0 0;">Fish Results</div>
<div class="t" style="left:1148.2px;top:546.88px;font-size:13.20px;font-weight:400;color:#333;transform:scaleX(0.935);transform-origin:0 0;">UIS5896</div>
<div class="t" style="left:1298.2px;top:546.88px;font-size:13.20px;font-weight:400;color:#333;">7</div>
<div class="t" style="left:898.4px;top:581.88px;font-size:13.20px;font-weight:400;color:#333;transform:scaleX(0.970);transform-origin:0 0;">Congelator First</div>
<div class="t" style="left:1148.2px;top:581.88px;font-size:13.20px;font-weight:400;color:#333;transform:scaleX(0.935);transform-origin:0 0;">HEP8524</div>
<div class="t" style="left:1298.2px;top:581.88px;font-size:13.20px;font-weight:400;color:#333;">7</div>
<div style="left:1346px;top:328px;width:15px;height:260px;background:#bababa;"></div>
<div style="left:1346px;top:328px;width:15px;height:17px;background:#e6e6e6;"></div>
<svg style="left:1349px;top:331px;" width="9" height="10" viewBox="0 0 9 10"><path d="M4.5 1 V9 M1 4.5 L4.5 1 L8 4.5" fill="none" stroke="#aaa" stroke-width="1"/></svg>
<div style="left:1361px;top:193px;width:1px;height:400px;background:#f0f0f0;"></div>
<div style="left:469px;top:593px;width:916px;height:24px;background:#eef6fd;"></div>
<div style="left:499px;top:599px;width:840px;height:2px;background:#8a8a8a;border-radius:1px;"></div>
<div style="left:1367px;top:181px;width:2px;height:200px;background:#8a8a8a;border-radius:1px;"></div>
<div style="left:493px;top:411px;width:266px;height:17px;border:2px solid #ff0000;box-sizing:border-box;"></div>
<div style="left:493px;top:429.5px;width:266px;height:17.0px;border:2px solid #0000ff;box-sizing:border-box;"></div>
<div style="left:493px;top:385px;width:21px;height:18px;background:#ff0000;"></div>
<svg style="left:500.5px;top:393.2px;" width="7.6" height="12" viewBox="0 0 7.6 12"><polygon points="3.39,0.00 6.60,0.00 6.60,11.00 3.39,11.00 3.39,3.49 0.18,4.88 0.00,2.77" fill="#fff"/></svg>
<div style="left:493px;top:403px;width:21px;height:24.5px;background:#0000ff;"></div>
<div class="t" style="left:499.0px;top:409.10px;font-size:14.00px;font-weight:700;color:#fff;">2</div>
<div class="t" style="left:466.4px;top:647.66px;font-size:13.46px;font-weight:400;color:#222;">Items</div>
<div style="left:510px;top:631px;width:40px;height:40px;border:2px solid #3f51b5;border-radius:3px;box-sizing:border-box;background:#fff;"></div>
<svg style="left:515px;top:636px;" width="30" height="30" viewBox="0 0 30 30"><circle cx="15" cy="15" r="15" fill="#ff0000"/></svg>
<svg style="left:526.4px;top:647px;" width="6.8" height="12" viewBox="0 0 6.8 12"><polygon points="2.98,0.00 5.80,0.00 5.80,11.00 2.98,11.00 2.98,3.49 0.16,4.88 0.00,2.77" fill="#fff"/></svg>
<div style="left:569px;top:631px;width:34px;height:40px;background:#fdfdfd;border:1px solid #efefef;border-bottom-color:#e6e6e6;border-radius:4px;box-sizing:border-box;"></div>
<div style="left:613px;top:631px;width:34px;height:40px;background:#fdfdfd;border:1px solid #efefef;border-bottom-color:#e6e6e6;border-radius:4px;box-sizing:border-box;"></div>
<svg style="left:577px;top:645px;" width="18" height="12" viewBox="0 0 18 12"><path d="M1 6 H17 M6 1 L1 6 L6 11" fill="none" stroke="#b5b5b5" stroke-width="1.3"/></svg>
<svg style="left:621px;top:645px;" width="18" height="12" viewBox="0 0 18 12"><path d="M1 6 H17 M12 1 L17 6 L12 11" fill="none" stroke="#b5b5b5" stroke-width="1.3"/></svg>
<div style="left:657px;top:631px;width:112px;height:40px;background:#fdfdfd;border:1px solid #efefef;border-bottom-color:#e6e6e6;border-radius:4px;box-sizing:border-box;"></div>
<div class="t" style="left:665.6px;top:644.76px;font-size:13.58px;font-weight:400;color:#ababab;">Merge Selected</div>
<div class="t" style="left:466.4px;top:697.27px;font-size:13.80px;font-weight:400;color:#222;">Markup Type</div>
<div style="left:558px;top:686px;width:104px;height:32px;background:#005fb8;border-radius:4px;"></div>
<div class="t" style="left:568.4px;top:696.88px;font-size:13.56px;font-weight:400;color:#ffffff;">Text and Area</div>
<div style="left:669px;top:686px;width:113px;height:33px;background:#fdfdfd;border:1px solid #e8e8e8;border-bottom-color:#d8d8d8;border-radius:4px;box-sizing:border-box;"></div>
<div class="t" style="left:680.1px;top:696.58px;font-size:13.91px;font-weight:400;color:#222;">Text and Arrow</div>
<div style="left:789px;top:686px;width:72px;height:33px;background:#fdfdfd;border:1px solid #e8e8e8;border-bottom-color:#d8d8d8;border-radius:4px;box-sizing:border-box;"></div>
<div class="t" style="left:800.0px;top:696.99px;font-size:13.43px;font-weight:400;color:#222;">Text Box</div>
<div class="t" style="left:466.4px;top:742.03px;font-size:13.49px;font-weight:400;color:#222;">Position</div>
<div class="t" style="left:556.4px;top:741.51px;font-size:13.40px;font-weight:400;color:#222;">X:</div>
<div style="left:576px;top:731px;width:54px;height:31px;background:#fdfdfd;border:1px solid #e3e3e3;border-bottom-color:#c8c8c8;border-radius:4px;box-sizing:border-box;"></div>
<div class="t" style="left:581.6px;top:741.10px;font-size:14.00px;font-weight:400;color:#9a9a9a;">13</div>
<div class="t" style="left:661.3px;top:741.51px;font-size:13.40px;font-weight:400;color:#222;">Y:</div>
<div style="left:681px;top:731px;width:54px;height:31px;background:#fdfdfd;border:1px solid #e3e3e3;border-bottom-color:#c8c8c8;border-radius:4px;box-sizing:border-box;"></div>
<div class="t" style="left:686.4px;top:741.10px;font-size:14.00px;font-weight:400;color:#9a9a9a;">249</div>
<div style="left:636px;top:728px;width:15px;height:14.5px;background:#f0f0f0;border:1px solid #cfcfcf;border-bottom-color:#bdbdbd;border-radius:2px;box-sizing:border-box;"></div>
<div style="left:636px;top:744.5px;width:15px;height:15.0px;background:#f0f0f0;border:1px solid #cfcfcf;border-bottom-color:#bdbdbd;border-radius:2px;box-sizing:border-box;"></div>
<svg style="left:640px;top:731px;" width="8" height="9" viewBox="0 0 8 9"><path d="M7 0.5 V8.5 L1 4.5 Z" fill="#111"/></svg>
<svg style="left:640px;top:748px;" width="8" height="9" viewBox="0 0 8 9"><path d="M1 0.5 V8.5 L7 4.5 Z" fill="#111"/></svg>
<div style="left:741px;top:728px;width:15px;height:14.5px;background:#f0f0f0;border:1px solid #cfcfcf;border-bottom-color:#bdbdbd;border-radius:2px;box-sizing:border-box;"></div>
<div style="left:741px;top:744.5px;width:15px;height:15.0px;background:#f0f0f0;border:1px solid #cfcfcf;border-bottom-color:#bdbdbd;border-radius:2px;box-sizing:border-box;"></div>
<svg style="left:744px;top:731px;" width="10" height="8" viewBox="0 0 10 8"><path d="M0.5 7 H9.5 L5 1 Z" fill="#111"/></svg>
<svg style="left:744px;top:748px;" width="10" height="8" viewBox="0 0 10 8"><path d="M0.5 1 H9.5 L5 7 Z" fill="#111"/></svg>
<div style="left:556px;top:766px;width:200px;height:2px;background:#8cb4e0;"></div>
<div class="t" style="left:771.3px;top:741.51px;font-size:13.40px;font-weight:400;color:#222;">Size</div>
<div class="t" style="left:816.0px;top:741.51px;font-size:13.40px;font-weight:400;color:#222;">W:</div>
<div style="left:841px;top:731px;width:53px;height:31px;background:#fdfdfd;border:1px solid #e3e3e3;border-bottom-color:#c8c8c8;border-radius:4px;box-sizing:border-box;"></div>
<div class="t" style="left:846.6px;top:741.10px;font-size:14.00px;font-weight:400;color:#9a9a9a;">266</div>
<div style="left:899px;top:728px;width:15px;height:14.5px;background:#f0f0f0;border:1px solid #cfcfcf;border-bottom-color:#bdbdbd;border-radius:2px;box-sizing:border-box;"></div>
<div style="left:899px;top:744.5px;width:15px;height:15.0px;background:#f0f0f0;border:1px solid #cfcfcf;border-bottom-color:#bdbdbd;border-radius:2px;box-sizing:border-box;"></div>
<svg style="left:902px;top:729.5px;" width="10" height="11" viewBox="0 0 10 11"><path d="M1 5.5 H9 M5 1.5 V9.5" stroke="#111" stroke-width="2"/></svg>
<svg style="left:902px;top:746.5px;" width="10" height="11" viewBox="0 0 10 11"><path d="M1 6 H9" stroke="#111" stroke-width="2"/></svg>
<div class="t" style="left:925.4px;top:741.51px;font-size:13.40px;font-weight:400;color:#222;">H:</div>
<div style="left:947px;top:731px;width:53px;height:31px;background:#fdfdfd;border:1px solid #e3e3e3;border-bottom-color:#c8c8c8;border-radius:4px;box-sizing:border-box;"></div>
<div class="t" style="left:952.0px;top:741.10px;font-size:14.00px;font-weight:400;color:#9a9a9a;">18</div>
<div style="left:1005px;top:728px;width:15px;height:14.5px;background:#f0f0f0;border:1px solid #cfcfcf;border-bottom-color:#bdbdbd;border-radius:2px;box-sizing:border-box;"></div>
<div style="left:1005px;top:744.5px;width:15px;height:15.0px;background:#f0f0f0;border:1px solid #cfcfcf;border-bottom-color:#bdbdbd;border-radius:2px;box-sizing:border-box;"></div>
<svg style="left:1008px;top:729.5px;" width="10" height="11" viewBox="0 0 10 11"><path d="M1 5.5 H9 M5 1.5 V9.5" stroke="#111" stroke-width="2"/></svg>
<svg style="left:1008px;top:746.5px;" width="10" height="11" viewBox="0 0 10 11"><path d="M1 6 H9" stroke="#111" stroke-width="2"/></svg>
<div style="left:1028px;top:730.5px;width:66px;height:30.5px;background:#fdfdfd;border:1px solid #e8e8e8;border-bottom-color:#d8d8d8;border-radius:4px;box-sizing:border-box;"></div>
<div class="t" style="left:1038.5px;top:741.85px;font-size:12.88px;font-weight:400;color:#222;">Expand</div>
<div style="left:1104px;top:730.5px;width:57px;height:30.5px;background:#fdfdfd;border:1px solid #e8e8e8;border-bottom-color:#d8d8d8;border-radius:4px;box-sizing:border-box;"></div>
<div class="t" style="left:1114.0px;top:741.44px;font-size:13.36px;font-weight:400;color:#222;">20x20</div>
<div style="left:1169px;top:731px;width:66px;height:31px;background:#fdfdfd;border:1px solid #e8e8e8;border-bottom-color:#d8d8d8;border-radius:4px;box-sizing:border-box;"></div>
<div class="t" style="left:1179.3px;top:742.20px;font-size:13.06px;font-weight:400;color:#222;">Redraw</div>
<div style="left:816px;top:766px;width:420px;height:2px;background:#8cb4e0;"></div>
<div class="t" style="left:466.0px;top:791.14px;font-size:13.37px;font-weight:400;color:#222;">Step Text</div>
<div style="left:554px;top:786.5px;width:484px;height:58.5px;background:#ffffff;border:1px solid #e3e3e3;border-bottom-color:#a8a8a8;border-radius:4px;box-sizing:border-box;"></div>
<div class="t" style="left:561.5px;top:796.29px;font-size:13.78px;font-weight:400;color:#8f8f8f;">Check the New checkbox</div>
<div style="left:1044px;top:799px;width:40px;height:33.5px;background:#fdfdfd;border:1px solid #e6e6e6;border-bottom-color:#d6d6d6;border-radius:4px;box-sizing:border-box;"></div>
<div style="left:1090px;top:799px;width:40px;height:33.5px;background:#fdfdfd;border:1px solid #e6e6e6;border-bottom-color:#d6d6d6;border-radius:4px;box-sizing:border-box;"></div>
<svg style="left:1054px;top:806px;" width="20" height="20" viewBox="0 0 20 20"><circle cx="9.4" cy="2.3" r="1.3" fill="#222"/><path d="M9.4 2.5 V5.5" stroke="#222" stroke-width="1.3"/><rect x="4.6" y="5.6" width="9.6" height="5.9" rx="1.8" fill="none" stroke="#222" stroke-width="1.5"/><rect x="2.6" y="7.6" width="1.6" height="2.2" fill="#222"/><rect x="14.6" y="7.6" width="1.6" height="2.2" fill="#222"/><circle cx="7.6" cy="8.5" r="0.6" fill="#222"/><circle cx="11.4" cy="8.5" r="0.6" fill="#222"/><path d="M7.9 11.5 V13.5 M11 11.5 V13.5" stroke="#222" stroke-width="1.1"/><path d="M2.8 19 V14.3 H16.8 V19" fill="none" stroke="#222" stroke-width="1.6"/></svg>
<svg style="left:1100px;top:805px;" width="20" height="22" viewBox="0 0 20 22"><rect x="7.2" y="2.1" width="4.7" height="2.3" rx="0.8" fill="none" stroke="#222" stroke-width="1.2"/><path d="M2 4.7 H16.8" stroke="#222" stroke-width="1.5"/><path d="M3.1 5 L3.6 18.6 Q3.7 19.9 5 19.9 H14.2 Q15.5 19.9 15.5 18.6 L16 5" fill="none" stroke="#222" stroke-width="1.5"/><path d="M7.3 8 V16.2 M9.4 8 V16.2 M11.6 8 V16.2" stroke="#222" stroke-width="1.1"/></svg>
<div style="left:13px;top:857px;width:142px;height:33.5px;background:#fdfdfd;border:1px solid #e6e6e6;border-bottom-color:#d6d6d6;border-radius:4px;box-sizing:border-box;"></div>
<div class="t" style="left:34.3px;top:869.38px;font-size:13.43px;font-weight:400;color:#222;">Clear Everything</div>
<div style="left:941.5px;top:857px;width:93.5px;height:33.5px;background:#fdfdfd;border:1px solid #e6e6e6;border-bottom-color:#d6d6d6;border-radius:4px;box-sizing:border-box;"></div>
<svg style="left:951px;top:865px;" width="20" height="20" viewBox="0 0 20 20"><g fill="none" stroke="#333"><circle cx="10" cy="10" r="7.2" stroke-width="1.6" stroke-dasharray="1.9 1.87"/><circle cx="10" cy="10" r="6.2" stroke-width="1.1"/><circle cx="10" cy="10" r="3.1" stroke-width="1"/></g><circle cx="10" cy="10" r="1.2" fill="#222"/></svg>
<div class="t" style="left:975.0px;top:869.27px;font-size:13.56px;font-weight:400;color:#222;">Settings</div>
<div style="left:1042px;top:857px;width:280px;height:34px;background:#005fb8;border-radius:4px;"></div>
<div class="t" style="left:1053.5px;top:869.09px;font-size:13.78px;font-weight:400;color:#ffffff;">Complete Capture and Convert to Frames</div>
<div style="left:1329px;top:857px;width:56px;height:34px;background:#fdfdfd;border:1px solid #e6e6e6;border-bottom-color:#d6d6d6;border-radius:4px;box-sizing:border-box;"></div>
<div class="t" style="left:1340.5px;top:869.83px;font-size:12.91px;font-weight:400;color:#222;">Close</div>
<svg style="left:170px;top:190px;" width="160" height="60" viewBox="0 0 160 60"><path d="M33 31.6 H122" stroke="#ff0000" stroke-width="3.6"/><path d="M7 32 L33 19 L33 45 Z" fill="#ff0000"/><circle cx="122" cy="31" r="26.5" fill="#ff0000"/></svg>
<svg style="left:276px;top:210px;" width="11.3" height="24.1" viewBox="0 0 11.3 24.1"><polygon points="5.29,0.00 10.30,0.00 10.30,23.10 5.29,23.10 5.29,7.33 0.28,10.24 0.00,5.83" fill="#fff"/></svg>
<div class="t" style="left:292.0px;top:206.07px;font-size:32.50px;font-weight:700;color:#ffffff;">7</div>
<svg style="left:460px;top:73px;" width="54" height="54" viewBox="0 0 54 54"><circle cx="27" cy="27" r="26.5" fill="#ff0000"/></svg>
<svg style="left:471.1px;top:88.8px;" width="11.9" height="24" viewBox="0 0 11.9 24"><polygon points="5.60,0.00 10.90,0.00 10.90,23.00 5.60,23.00 5.60,7.30 0.30,10.20 0.00,5.80" fill="#fff"/></svg>
<div class="t" style="left:487.0px;top:84.78px;font-size:32.50px;font-weight:700;color:#ffffff;">6</div>
<svg style="left:770px;top:340px;" width="200" height="100" viewBox="0 0 200 100"><path d="M150 40 L35 75.5" stroke="#ff0000" stroke-width="3.6"/><path d="M12 82 L32 63 L41 87 Z" fill="#ff0000"/><circle cx="158" cy="36" r="26.5" fill="#ff0000"/></svg>
<svg style="left:912px;top:364.3px;" width="12" height="23.6" viewBox="0 0 12 23.6"><polygon points="5.65,0.00 11.00,0.00 11.00,22.60 5.65,22.60 5.65,7.17 0.30,10.02 0.00,5.70" fill="#fff"/></svg>
<div class="t" style="left:927.4px;top:360.30px;font-size:32.00px;font-weight:700;color:#ffffff;">8</div>
<div style="left:159.5px;top:249px;width:308.5px;height:29px;background:#f9f9f9;border:1px solid #e4e4e4;border-radius:4px;box-sizing:border-box;box-shadow:0 2px 4px rgba(0,0,0,0.08);"></div>
<div class="t" style="left:170.2px;top:257.66px;font-size:14.05px;font-weight:400;color:#222;">Merge with next step (same app/window only)</div>
</div></body></html>
